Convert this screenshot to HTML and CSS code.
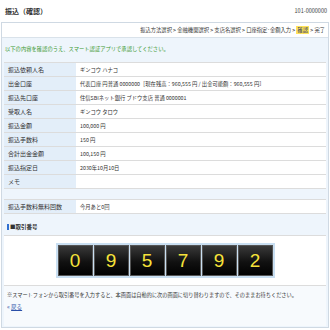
FILE: index.html
```
<!DOCTYPE html>
<html lang="ja">

<head>
  <meta charset="UTF-8">
  <meta name="viewport" content="width=device-width, initial-scale=1.0">
  <title>振込（確認）</title>
  <link rel="stylesheet" href="styles.css">
</head>

<body>
  <div class="page__head">
    <h1 class="page__title">振込（確認）</h1>
    <span class="page__id">101-0000000</span>
  </div>

  <div class="panel">
    <div class="steps">
      振込方法選択 &gt; 金融機関選択 &gt; 支店名選択 &gt; 口座指定･金額入力 &gt; <span class="steps__current">確認</span> &gt; 完了
    </div>

    <p class="lead">以下の内容を確認のうえ、スマート認証アプリで承認してください。</p>

    <table class="detail">
      <tr><th>振込依頼人名</th><td>ギンコウ ハナコ</td></tr>
      <tr><th>出金口座</th><td>代表口座 円普通 0000000［現在残高：960,555 円 / 出金可能額：960,555 円］</td></tr>
      <tr><th>振込先口座</th><td>住信SBIネット銀行 ブドウ支店 普通 0000001</td></tr>
      <tr><th>受取人名</th><td>ギンコウ タロウ</td></tr>
      <tr><th>振込金額</th><td>100,000 円</td></tr>
      <tr><th>振込手数料</th><td>150 円</td></tr>
      <tr><th>合計出金金額</th><td>100,150 円</td></tr>
      <tr><th>振込指定日</th><td>2030年10月10日</td></tr>
      <tr><th>メモ</th><td></td></tr>
    </table>

    <table class="detail detail--second">
      <tr><th>振込手数料無料回数</th><td>今月あと0回</td></tr>
    </table>

    <div class="section__title">■取引番号</div>

    <div class="code">
      <div class="code__board">
        <span class="code__digit">0</span>
        <span class="code__digit">9</span>
        <span class="code__digit">5</span>
        <span class="code__digit">7</span>
        <span class="code__digit">9</span>
        <span class="code__digit">2</span>
      </div>
    </div>

    <div class="foot">
      <p class="foot__note">※スマートフォンから取引番号を入力すると、本画面は自動的に次の画面に切り替わりますので、そのままお待ちください。</p>
      <a class="foot__back" href="#"><span class="foot__arrow">&laquo;</span> <u>戻る</u></a>
    </div>
  </div>
</body>

</html>
```

FILE: styles.css
```
body {
  margin: 0;
  width: 330px;
  font-family: "Noto Sans CJK JP", "Noto Sans", sans-serif;
  font-size: 6px;
  color: #333;
  background: #fff;
}

.page__head {
  display: flex;
  justify-content: space-between;
  align-items: center;
  height: 22px;
  padding: 0 3px 0 5px;
}

.page__title {
  margin: 0;
  font-size: 7px;
  font-weight: bold;
  color: #333;
}

.page__id {
  font-size: 5.5px;
  color: #444;
}

.panel {
  margin: 0 1px;
  padding: 0 2px 1px 2px;
  border: 1px solid #cfd9e3;
  background: #eef5fc;
}

.steps {
  height: 14px;
  line-height: 14px;
  margin: 0 -2px;
  padding-right: 3px;
  text-align: right;
  font-size: 5.3px;
  color: #333;
  background: #fff;
  border-bottom: 1px solid #d9e2ea;
}

.steps__current {
  padding: 0 1px;
  background: #ffe35a;
  color: #1c2f6a;
}

.lead {
  margin: 0;
  height: 24px;
  line-height: 22px;
  padding-left: 1px;
  font-size: 5.3px;
  color: #3c9a32;
}

.detail {
  width: 100%;
  border-collapse: collapse;
  border-top: 1px solid #dcdcdc;
}

.detail th,
.detail td {
  height: 13px;
  padding: 0 4px;
  border-bottom: 1px solid #dcdcdc;
  font-weight: normal;
  text-align: left;
  white-space: nowrap;
}

.detail th {
  width: 64px;
  background: #e3eef9;
}

.detail td {
  background: #fff;
  font-size: 5.3px;
}

.detail--second {
  margin-top: 10px;
}

.section__title {
  height: 21px;
  line-height: 27px;
  padding-left: 3px;
  font-size: 5.5px;
  font-weight: bold;
  border-bottom: 1px solid #dcdcdc;
}

.section__title::before {
  content: "";
  display: inline-block;
  width: 2px;
  height: 6px;
  margin-right: 1px;
  vertical-align: -1px;
  background: #2f6fd1;
}

.code {
  display: flex;
  justify-content: center;
  padding: 7px 0 7px 0;
  background: #fff;
  border-bottom: 1px solid #dcdcdc;
}

.code__board {
  display: flex;
  gap: 1px;
  padding: 2px;
  background: #c9dff2;
}

.code__digit {
  width: 35px;
  height: 31px;
  line-height: 31px;
  text-align: center;
  font-family: "Liberation Sans", sans-serif;
  font-size: 19px;
  color: #f6e23a;
  background: linear-gradient(#3b3b3b, #111 55%, #000);
  box-shadow: inset 0 0 0 1px #555;
}

.foot {
  height: 40px;
  padding-left: 3px;
  background: #f7fafd;
}

.foot__note {
  margin: 0;
  padding-top: 4px;
  font-size: 5.2px;
  line-height: 9px;
}

.foot__back {
  display: inline-block;
  margin-top: 3px;
  font-size: 5.5px;
  color: #2a4fa8;
  text-decoration: none;
}

.foot__arrow {
  font-size: 6px;
  color: #2a4fa8;
}
```
